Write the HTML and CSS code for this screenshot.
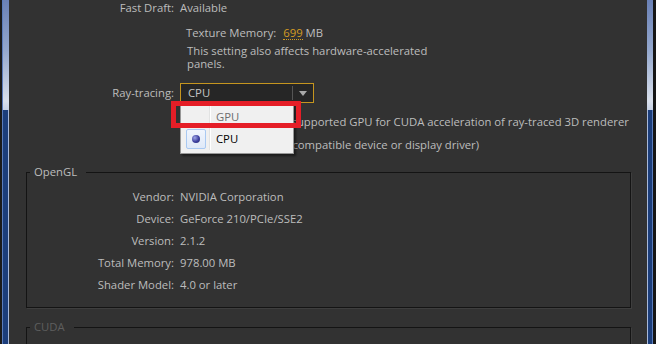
FILE: index.html
```html
<!DOCTYPE html>
<html>
<head>
<meta charset="utf-8">
<link rel="stylesheet" href="styles.css">
</head>
<body>
<div class="window">
  <div class="edge edge-left"><div class="edge-top"></div></div>
  <div class="content">
    <div class="row row-fast"><span class="label">Fast Draft:</span><span class="value">Available</span></div>
    <div class="tex">Texture Memory: <span class="num">699</span> MB</div>
    <p class="note">This setting also affects hardware-accelerated<br>panels.</p>
    <div class="row row-ray">
      <span class="label">Ray-tracing:</span>
      <div class="select-wrap">
        <div class="select">
          <span class="select-text">CPU</span>
          <span class="select-sep"></span>
          <span class="select-arrow"></span>
        </div>
        <div class="menu">
          <div class="menu-item disabled"><span class="gutter"></span><span class="item-text">GPU</span></div>
          <div class="menu-item"><span class="gutter"><span class="check"><span class="dot"></span></span></span><span class="item-text">CPU</span></div>
        </div>
        <div class="callout"></div>
      </div>
    </div>
    <div class="desc desc-1">Requires a supported GPU for CUDA acceleration of ray-traced 3D renderer</div>
    <div class="desc desc-2">(Incompatible device or display driver)</div>
    <fieldset class="group">
      <legend>OpenGL</legend>
      <div class="grow"><span class="glabel">Vendor:</span><span class="value">NVIDIA Corporation</span></div>
      <div class="grow"><span class="glabel">Device:</span><span class="value">GeForce 210/PCIe/SSE2</span></div>
      <div class="grow"><span class="glabel">Version:</span><span class="value">2.1.2</span></div>
      <div class="grow"><span class="glabel">Total Memory:</span><span class="value">978.00 MB</span></div>
      <div class="grow"><span class="glabel">Shader Model:</span><span class="value">4.0 or later</span></div>
    </fieldset>
    <fieldset class="group group-cuda">
      <legend>CUDA</legend>
    </fieldset>
  </div>
  <div class="edge edge-right"><div class="edge-top"></div></div>
</div>
</body>
</html>
```

FILE: styles.css
```css
html, body {
  margin: 0;
  padding: 0;
  background: #323232;
  overflow: hidden;
  height: 344px;
}
body {
  font-family: "Open Sans", "Noto Sans", sans-serif;
  font-size: 11.3px;
  color: #bdbdbd;
}
.window {
  display: flex;
  height: 344px;
  width: 656px;
  overflow: hidden;
}
.edge {
  flex: none;
  height: 100%;
  position: relative;
  background: #1c3e7b;
}
.edge-left {
  width: 6px;
  margin-left: 3px;
  box-shadow: -1px 0 0 #5a7cbc, -3px 0 0 #1b1b1b, inset -1px 0 0 #a8b9da;
}
.edge-right {
  width: 6px;
  margin-right: 3px;
  box-shadow: 3px 0 0 #161616, inset 1px 0 0 #a8b9da, inset -1px 0 0 #5a7cbc;
}
.edge-top {
  height: 110px;
  background: linear-gradient(#6a81b6, #93a7cd 45%, #d9e0ec 92%, #c7d2e6);
}
.content {
  flex: 1;
  min-width: 0;
  height: 344px;
  overflow: hidden;
}
.row {
  display: flex;
  align-items: center;
  line-height: 16px;
}
.label {
  width: 165px;
  text-align: right;
  flex: none;
  margin-right: 6px;
}
.row-fast { height: 16px; }
.tex {
  margin: 9px 0 0 177px;
  line-height: 16px;
}
.num {
  color: #d49b22;
  border-bottom: 1px dotted #d49b22;
  margin-left: 4px;
  line-height: 12px;
  display: inline-block;
}
.note {
  margin: 3px 0 0 178px;
  line-height: 13px;
}
.row-ray {
  margin-top: 13px;
  height: 20px;
}
.select-wrap {
  position: relative;
}
.select {
  width: 132px;
  height: 18px;
  border: 1px solid #c5951f;
  background: #262626;
  display: flex;
  align-items: center;
  position: relative;
}
.select-text {
  margin-left: 7px;
  flex: 1;
  color: #c4c4c4;
}
.select-sep {
  width: 1px;
  height: 14px;
  background: #555;
  margin-right: 6px;
}
.select-arrow {
  width: 0;
  height: 0;
  border-left: 4px solid transparent;
  border-right: 4px solid transparent;
  border-top: 5px solid #a9a9a9;
  margin-right: 6px;
}
.menu {
  position: absolute;
  left: 0;
  top: 20px;
  width: 112px;
  background: #f0f0f0;
  border: 1px solid #979797;
  box-shadow: 2px 2px 2px rgba(0, 0, 0, 0.45);
  padding: 2px 0 3px;
  z-index: 2;
}
.menu-item {
  display: flex;
  align-items: center;
  height: 22px;
  color: #000;
}
.menu-item.disabled { color: #6d6d6d; }
.gutter {
  width: 28px;
  height: 22px;
  margin-right: 6px;
  border-right: 1px solid #e2e3e3;
  box-shadow: 1px 0 0 #fff;
  display: flex;
  align-items: center;
  justify-content: center;
  flex: none;
}
.check {
  width: 20px;
  height: 20px;
  box-sizing: border-box;
  border: 1px solid #a9c9f2;
  border-radius: 2px;
  background: linear-gradient(#f0f5fd, #dfe9f8);
  display: flex;
  align-items: center;
  justify-content: center;
  margin-left: 1px;
}
.dot {
  width: 8px;
  height: 8px;
  border-radius: 50%;
  background: radial-gradient(circle at 35% 35%, #9ea6e8, #3c3f9e 55%, #23266b);
}
.callout {
  position: absolute;
  left: -9px;
  top: 18px;
  width: 120px;
  height: 17px;
  border: 5px solid #e51e27;
  z-index: 3;
}
.desc {
  line-height: 16px;
  white-space: nowrap;
}
.desc-1 { margin-top: 11px; margin-left: 224px; }
.desc-2 { margin-top: 7px; margin-left: 270px; }
.group {
  margin: 12px 0 0 17px;
  width: 603px;
  padding: 7px 0 11px 0;
  border: 1px solid #141414;
  box-shadow: 1px 1px 0 #3e3e3e;
  min-width: 0;
}
.group legend {
  margin-left: 3px;
  padding: 0 9px 0 4px;
  line-height: 14px;
}
.grow {
  display: flex;
  line-height: 22px;
}
.glabel {
  width: 147px;
  flex: none;
  text-align: right;
  margin-right: 6px;
}
.group-cuda {
  margin-top: 12px;
  height: 40px;
}
.group-cuda legend {
  color: #5e5e5e;
}
```
